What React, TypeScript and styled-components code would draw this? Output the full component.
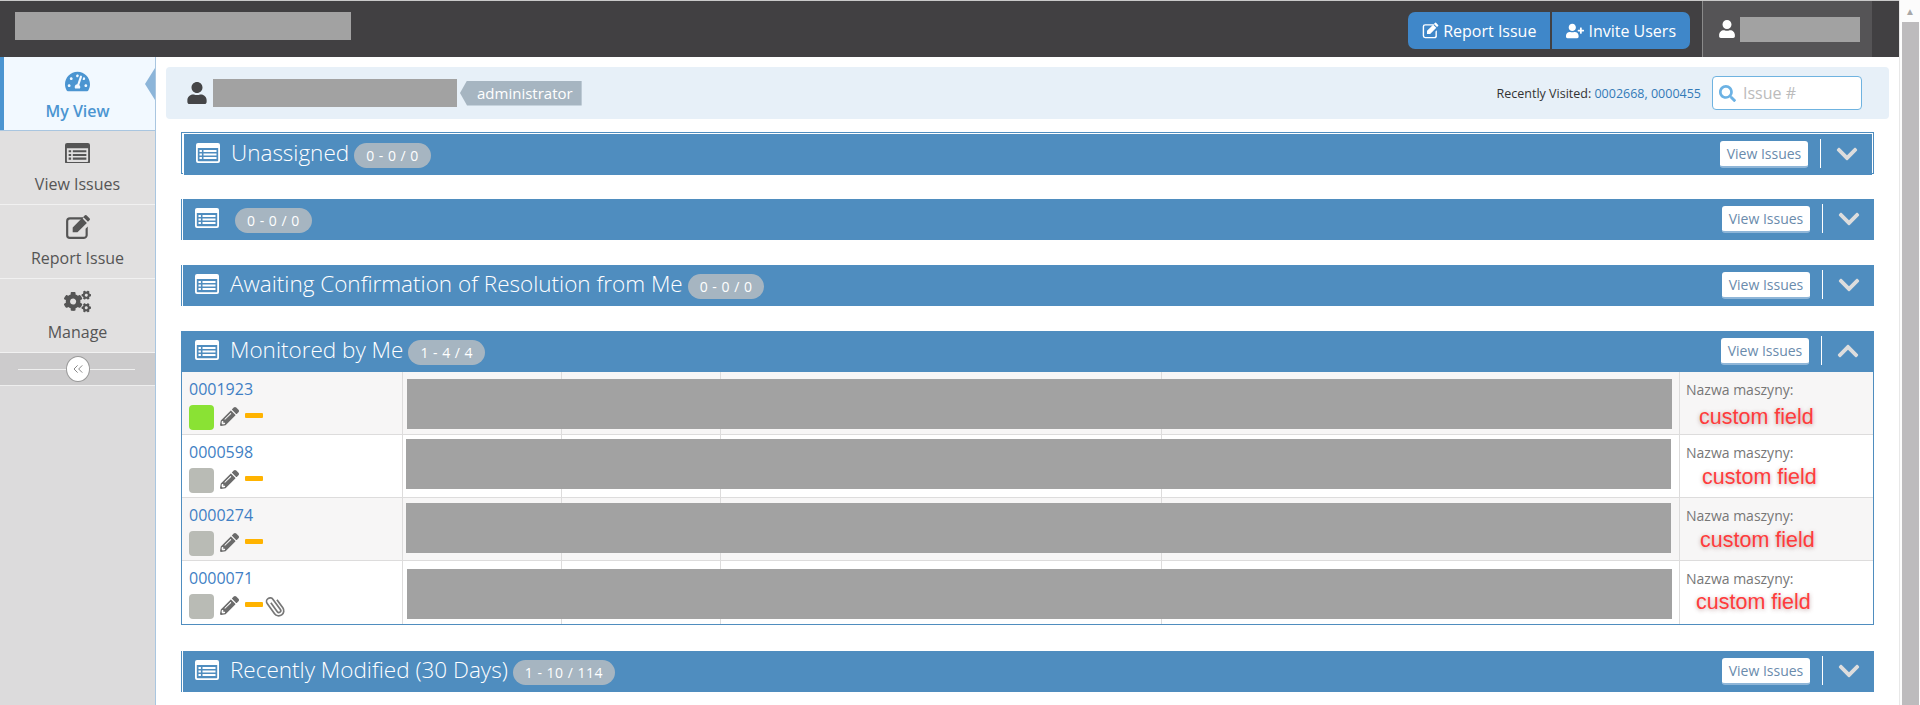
import styled, { createGlobalStyle } from 'styled-components';
import {
  FaChevronDown,
  FaChevronUp,
  FaCogs,
  FaPencilAlt,
  FaSearch,
  FaTachometerAlt,
  FaUser,
  FaUserPlus,
} from 'react-icons/fa';
import { ChevronsLeft } from 'lucide-react';

const GlobalStyle = createGlobalStyle`
  html, body {
    margin: 0;
    height: 100%;
    overflow: hidden;
    background: #fff;
  }
  * {
    box-sizing: border-box;
  }
  body {
    font-family: "Open Sans", "Liberation Sans", sans-serif;
    color: #555;
  }
`;

const rows = [
  { id: '0001923', status: '#8ae234', stripe: true, left: 407, top: 7, field: 19, fieldTop: 3, clip: false },
  { id: '0000598', status: '#b9bbb5', stripe: false, left: 406, top: 4, field: 22, fieldTop: 0, clip: false },
  { id: '0000274', status: '#b9bbb5', stripe: true, left: 406, top: 5, field: 20, fieldTop: 0, clip: false },
  { id: '0000071', status: '#b9bbb5', stripe: false, left: 407, top: 8, field: 16, fieldTop: -1, clip: true },
];

const ListIcon = ({ width, color }: { width: number; color: string }) => (
  <svg width={width} height={(width * 20) / 24} viewBox="0 0 24 20" fill={color}>
    <path
      fillRule="evenodd"
      d="M2 0h20a2 2 0 0 1 2 2v16a2 2 0 0 1-2 2H2a2 2 0 0 1-2-2V2a2 2 0 0 1 2-2zM1.8 5v12.4a.8.8 0 0 0 .8.8h18.8a.8.8 0 0 0 .8-.8V5z"
    />
    <path d="M3.5 7h2.4v2H3.500zM7.500 7h13v2h-13zM3.500 10.500h2.400v2H3.500zM7.500 10.500h13v2h-13zM3.500 14h2.400v2H3.500zM7.500 14h13v2h-13z" />
  </svg>
);

const EditIcon = ({ size, color }: { size: number; color: string }) => (
  <svg width={size} height={size} viewBox="0 0 24 24" fill={color}>
    <path d="M4.500 3h13l-2 2h-11a1.500 1.500 0 0 0-1.500 1.500v13A1.500 1.500 0 0 0 4.500 21h13a1.500 1.500 0 0 0 1.500-1.500v-6l2-2v7.500A3.500 3.500 0 0 1 17.500 23h-13A3.500 3.500 0 0 1 1 19.500v-13A3.500 3.500 0 0 1 4.500 3z" />
    <path d="M19.800 1.200l3 3a1 1 0 0 1 0 1.400l-1.600 1.600-4.400-4.400 1.600-1.600a1 1 0 0 1 1.400 0zM15.800 3.800l4.400 4.400-8.700 8.700H7.100v-4.400z" />
  </svg>
);

const ClipIcon = () => (
  <ClipSvg width="20" height="24" viewBox="0 0 20 24" fill="none" stroke="#777" strokeWidth="1.700">
    <path d="M8.500 7v11a1.900 1.900 0 0 0 3.800 0V5.500a3.600 3.600 0 0 0-7.200 0V18a5 5 0 0 0 10.200 0V8" transform="rotate(-36 10 12)" />
  </ClipSvg>
);

const App = () => {
  return (
    <Page>
      <GlobalStyle />
      <Window>
        <TopBar>
          <LogoRedaction />
          <TopActions>
            <ActionGroup>
              <ActionButton>
                <EditIcon size={17} color="#fff" />
                Report Issue
              </ActionButton>
              <ActionButton>
                <FaUserPlus size={18} />
                Invite Users
              </ActionButton>
            </ActionGroup>
            <UserBox>
              <FaUser size={18} color="#fff" />
              <UserRedaction />
            </UserBox>
          </TopActions>
        </TopBar>
        <Body>
          <Sidebar>
            <NavItem $active>
              <NavIcon>
                <FaTachometerAlt size={25} />
              </NavIcon>
              <NavLabel $active>My View</NavLabel>
              <ActiveArrow />
            </NavItem>
            <NavItem>
              <NavIcon>
                <ListIcon width={25} color="#555" />
              </NavIcon>
              <NavLabel>View Issues</NavLabel>
            </NavItem>
            <NavItem>
              <NavIcon>
                <EditIcon size={26} color="#555" />
              </NavIcon>
              <NavLabel>Report Issue</NavLabel>
            </NavItem>
            <NavItem>
              <NavIcon>
                <FaCogs size={27} />
              </NavIcon>
              <NavLabel>Manage</NavLabel>
            </NavItem>
            <CollapseRow>
              <CollapseButton>
                <ChevronsLeft size={16} strokeWidth={1.5} color="#888" />
              </CollapseButton>
            </CollapseRow>
          </Sidebar>
          <Main>
            <Breadcrumbs>
              <BreadcrumbUser>
                <FaUser size={22} color="#454547" />
                <NameRedaction />
                <RoleTag>administrator</RoleTag>
              </BreadcrumbUser>
              <BreadcrumbRight>
                <Recent>
                  Recently Visited: <RecentLink>0002668, 0000455</RecentLink>
                </Recent>
                <SearchBox>
                  <FaSearch size={17} color="#6cb2e4" />
                  <SearchHint>Issue #</SearchHint>
                </SearchBox>
              </BreadcrumbRight>
            </Breadcrumbs>
            <Widgets>
              <Widget $outlined>
                <WidgetHeader title="Unassigned" count="0 - 0 / 0" />
              </Widget>
              <Widget>
                <WidgetHeader title="" count="0 - 0 / 0" />
              </Widget>
              <Widget>
                <WidgetHeader title="Awaiting Confirmation of Resolution from Me" count="0 - 0 / 0" />
              </Widget>
              <Widget $open>
                <WidgetHeader title="Monitored by Me" count="1 - 4 / 4" open />
                <IssueTable>
                  {rows.map((row) => (
                    <IssueRow key={row.id} $stripe={row.stripe}>
                      <IdCell>
                        <IssueLink>{row.id}</IssueLink>
                        <IssueIcons>
                          <StatusSquare $color={row.status} />
                          <PencilIcon size={19} color="#6b6b6b" />
                          <PriorityBar />
                          {row.clip && <ClipIcon />}
                        </IssueIcons>
                      </IdCell>
                      <Cell />
                      <Cell />
                      <Cell />
                      <Cell />
                      <FieldCell>
                        <FieldName>Nazwa maszyny:</FieldName>
                        <FieldValue $indent={row.field} $shift={row.fieldTop}>
                          custom field
                        </FieldValue>
                      </FieldCell>
                      <RowRedaction $left={row.left - 182} $top={row.top} />
                    </IssueRow>
                  ))}
                </IssueTable>
              </Widget>
              <Widget>
                <WidgetHeader title="Recently Modified (30 Days)" count="1 - 10 / 114" />
              </Widget>
            </Widgets>
          </Main>
        </Body>
      </Window>
      <Scrollbar>
        <ScrollArrow>▲</ScrollArrow>
        <ScrollThumb />
      </Scrollbar>
    </Page>
  );
};

const WidgetHeader = ({ title, count, open }: { title: string; count: string; open?: boolean }) => {
  return (
    <HeaderBar>
      <HeaderLeft>
        <ListIconSlot>
          <ListIcon width={24} color="#fff" />
        </ListIconSlot>
        <WidgetTitle>{title}</WidgetTitle>
        <CountBadge>{count}</CountBadge>
      </HeaderLeft>
      <HeaderRight>
        <ViewButton>View Issues</ViewButton>
        <ToggleBox>{open ? <FaChevronUp size={24} /> : <FaChevronDown size={24} />}</ToggleBox>
      </HeaderRight>
    </HeaderBar>
  );
};

export default App;

const Page = styled.div`
  display: flex;
  width: 1920px;
  height: 705px;
  overflow: hidden;
`;
const Window = styled.div`
  flex: 1;
  min-width: 0;
  display: flex;
  flex-direction: column;
`;
const TopBar = styled.header`
  height: 57px;
  flex: none;
  display: flex;
  justify-content: space-between;
  background: #414042;
  border-top: 1px solid #c9c9c9;
`;
const Redaction = styled.div`
  flex: none;
  background: #a2a2a2;
`;
const LogoRedaction = styled(Redaction)`
  width: 336px;
  height: 28px;
  margin: 11px 0 0 15px;
`;
const TopActions = styled.div`
  display: flex;
  align-items: stretch;
  margin-right: 27px;
`;
const ActionGroup = styled.div`
  display: flex;
  height: 37px;
  margin: 11px 12px 0 0;
  border-radius: 7px;
  overflow: hidden;
`;
const ActionButton = styled.div`
  display: flex;
  align-items: center;
  gap: 4px;
  padding: 0 14px 0 14px;
  background: #3f87c9;
  color: #fff;
  font-size: 16px;
  & + & {
    border-left: 2px solid #414042;
  }
`;
const UserBox = styled.div`
  display: flex;
  align-items: center;
  width: 170px;
  padding-left: 15px;
  gap: 4px;
  background: #555456;
  border-left: 1px solid #8a8a8a;
`;
const UserRedaction = styled(Redaction)`
  width: 120px;
  height: 25px;
`;
const Body = styled.div`
  flex: 1;
  min-height: 0;
  display: flex;
`;
const Sidebar = styled.nav`
  width: 156px;
  flex: none;
  background: #dcdbdc;
  border-right: 1px solid #a9c6e0;
`;
const NavItem = styled.div<{ $active?: boolean }>`
  position: relative;
  height: 74px;
  display: flex;
  flex-direction: column;
  align-items: center;
  padding-top: ${(p) => (p.$active ? '11px' : '9px')};
  gap: ${(p) => (p.$active ? '6px' : '7px')};
  color: ${(p) => (p.$active ? '#4b95d1' : '#555')};
  background: ${(p) => (p.$active ? '#f2f9ff' : '#e1e0e0')};
  box-shadow: ${(p) => (p.$active ? 'inset 4px 0 0 #4b95d1' : 'none')};
  border-bottom: 1px solid ${(p) => (p.$active ? '#a9c6e0' : '#f1f1f1')};
`;
const NavIcon = styled.span`
  height: 26px;
  display: flex;
  align-items: center;
`;
const NavLabel = styled.span<{ $active?: boolean }>`
  font-size: 16px;
  font-weight: ${(p) => (p.$active ? 600 : 400)};
  line-height: 22px;
`;
const ActiveArrow = styled.span`
  position: absolute;
  right: 0;
  top: 11px;
  width: 10px;
  height: 32px;
  background: #8cb5d9;
  clip-path: polygon(100% 0, 0 50%, 100% 100%);
`;
const CollapseRow = styled.div`
  position: relative;
  height: 33px;
  display: flex;
  align-items: center;
  justify-content: center;
  background: #cccbcc;
  border-bottom: 1px solid #eee;
  &::before {
    content: '';
    position: absolute;
    left: 18px;
    right: 20px;
    top: 16px;
    height: 1px;
    background: #efefef;
  }
`;
const CollapseButton = styled.div`
  position: relative;
  width: 24px;
  height: 26px;
  display: flex;
  align-items: center;
  justify-content: center;
  border-radius: 50%;
  background: #fff;
  border: 1px solid #999;
`;
const Main = styled.main`
  flex: 1;
  min-width: 0;
  padding: 10px 10px 0;
`;
const Breadcrumbs = styled.div`
  height: 52px;
  display: flex;
  justify-content: space-between;
  align-items: center;
  background: #e7f0f8;
  border-radius: 4px;
  padding: 0 27px 0 20px;
`;
const BreadcrumbUser = styled.div`
  display: flex;
  align-items: center;
  gap: 5px;
`;
const NameRedaction = styled(Redaction)`
  width: 244px;
  height: 28px;
`;
const RoleTag = styled.span`
  position: relative;
  height: 25px;
  margin-left: -2px;
  padding: 0 9px 0 17px;
  background: #a6b5c1;
  color: #fff;
  font-size: 15px;
  line-height: 25px;
  clip-path: polygon(7px 0, 100% 0, 100% 100%, 7px 100%, 0 50%);
`;
const BreadcrumbRight = styled.div`
  display: flex;
  align-items: center;
  gap: 11px;
`;
const Recent = styled.span`
  font-size: 12.5px;
  color: #333;
`;
const RecentLink = styled.span`
  color: #337ab7;
`;
const SearchBox = styled.div`
  width: 150px;
  height: 34px;
  display: flex;
  align-items: center;
  gap: 7px;
  padding-left: 6px;
  background: #fff;
  border: 1px solid #6fb3e0;
  border-radius: 4px;
`;
const SearchHint = styled.span`
  font-size: 16px;
  color: #bbb;
`;
const Widgets = styled.div`
  display: flex;
  flex-direction: column;
  gap: 25px;
  margin: 13px 15px 0;
`;
const Widget = styled.section<{ $outlined?: boolean; $open?: boolean }>`
  border-left: 1px solid #4f8dbf;
  ${(p) => p.$outlined && 'border: 1px solid #4f8dbf; padding: 1px; background: #fff; height: 42px;'}
  ${(p) => p.$open && 'border: 1px solid #4f8dbf; border-top: none; margin-bottom: 1px;'}
`;
const HeaderBar = styled.div`
  height: 41px;
  display: flex;
  justify-content: space-between;
  align-items: center;
  padding: 0 13px 0 13px;
  background: #4f8dbf;
  box-shadow: inset 1px 0 0 #fff;
  section:has(> & + div) > & {
    box-shadow: none;
  }
`;
const HeaderLeft = styled.div`
  display: flex;
  align-items: center;
  color: #fff;
`;
const ListIconSlot = styled.span`
  display: flex;
  margin-top: -4px;
`;
const WidgetTitle = styled.h2`
  margin: -4px 5px 0 11px;
  font-size: 22.500px;
  font-weight: 300;
  line-height: 30px;
`;
const CountBadge = styled.span`
  height: 25px;
  margin-top: 2px;
  padding: 0 12px;
  border-radius: 13px;
  background: #a6b5c1;
  color: #fff;
  font-size: 14px;
  line-height: 25px;
  letter-spacing: 0.5px;
`;
const HeaderRight = styled.div`
  display: flex;
  align-items: center;
`;
const ViewButton = styled.span`
  width: 88px;
  height: 27px;
  background: #fff;
  border-bottom: 2px solid #8fb6d8;
  border-radius: 3px;
  color: #6a8bac;
  font-size: 14px;
  line-height: 25px;
  text-align: center;
`;
const ToggleBox = styled.span`
  display: flex;
  align-items: center;
  height: 29px;
  margin: -2px 0 0 12px;
  padding-left: 14px;
  border-left: 1px solid #fff;
  color: #ddd;
`;
const IssueTable = styled.div`
  display: flex;
  flex-direction: column;
`;
const IssueRow = styled.div<{ $stripe?: boolean }>`
  position: relative;
  height: 63px;
  display: grid;
  grid-template-columns: 221px 159px 159px 441px 518px 1fr;
  background: ${(p) => (p.$stripe ? '#f7f6f6' : '#fff')};
  border-bottom: 1px solid #dddcdc;
  &:last-child {
    border-bottom: none;
  }
`;
const Cell = styled.div`
  border-right: 1px solid #dddcdc;
`;
const IdCell = styled(Cell)`
  padding: 5px 0 0 7px;
`;
const IssueLink = styled.div`
  color: #3f7fc4;
  font-size: 16px;
  line-height: 24px;
`;
const IssueIcons = styled.div`
  display: flex;
  align-items: flex-start;
  margin-top: 4px;
`;
const StatusSquare = styled.span<{ $color: string }>`
  width: 25px;
  height: 25px;
  margin-right: 6px;
  border-radius: 4px;
  background: ${(p) => p.$color};
`;
const PencilIcon = styled(FaPencilAlt)`
  margin-top: 2px;
`;
const PriorityBar = styled.span`
  width: 18px;
  height: 5px;
  margin: 8px 0 0 6px;
  border-radius: 1px;
  background: #ffb300;
`;
const ClipSvg = styled.svg`
  margin: 0 0 0 2px;
`;
const FieldCell = styled.div`
  padding: 6px 0 0 6px;
`;
const FieldName = styled.div`
  color: #777;
  font-size: 14px;
  line-height: 24px;
`;
const FieldValue = styled.div<{ $indent: number; $shift: number }>`
  margin: ${(p) => p.$shift}px 0 0 ${(p) => p.$indent - 6}px;
  color: #ff3b3b;
  font-family: "Liberation Sans", Arial, sans-serif;
  font-size: 21.500px;
  line-height: 24px;
  text-shadow: 0 1px 4px rgba(120, 60, 60, 0.45);
`;
const RowRedaction = styled(Redaction)<{ $left: number; $top: number }>`
  position: absolute;
  left: ${(p) => p.$left}px;
  top: ${(p) => p.$top}px;
  width: 1265px;
  height: 50px;
`;
const Scrollbar = styled.aside`
  width: 21px;
  flex: none;
  display: flex;
  flex-direction: column;
  align-items: center;
  background: #fcfcfc;
  border-left: 1px solid #e8e8e8;
`;
const ScrollArrow = styled.div`
  height: 22px;
  color: #a8a8a8;
  font-size: 10px;
  line-height: 22px;
`;
const ScrollThumb = styled.div`
  flex: 1;
  width: 17px;
  background: #bdbbbd;
`;
